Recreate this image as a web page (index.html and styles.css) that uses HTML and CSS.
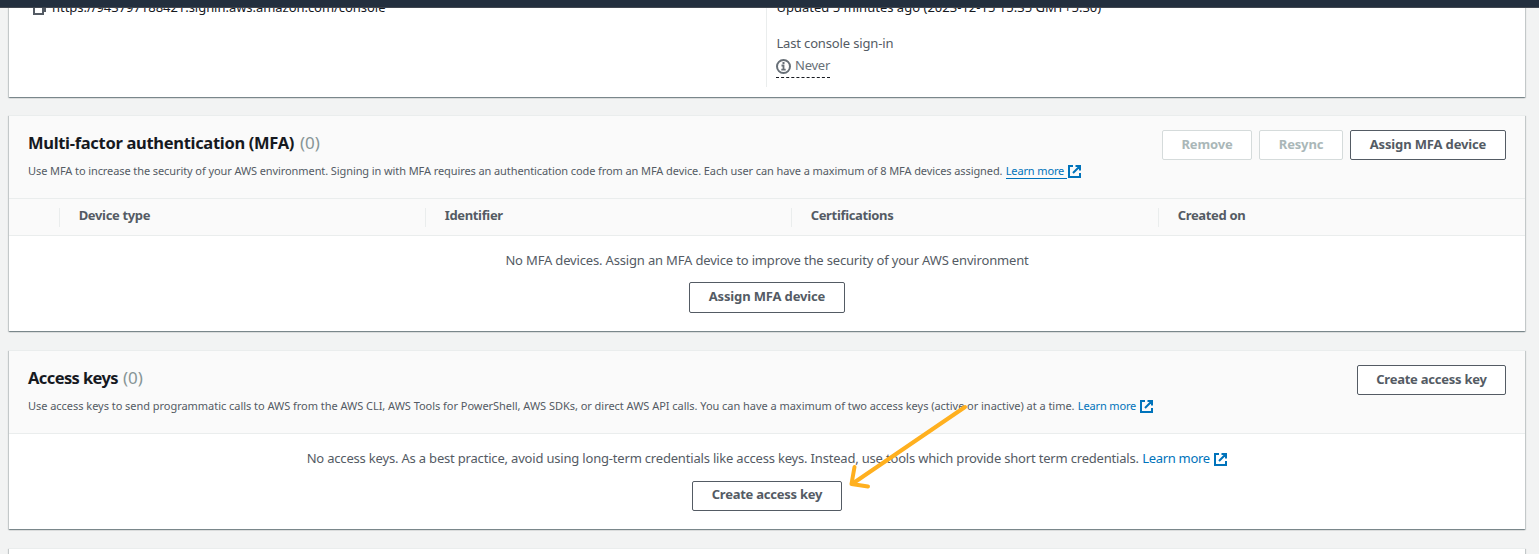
FILE: index.html
```html
<!DOCTYPE html>
<html lang="en">
<head>
<meta charset="utf-8">
<title>Security credentials</title>
<link rel="stylesheet" href="styles.css">
</head>
<body>
<svg width="0" height="0" class="sprite"><symbol id="ext" viewBox="0 0 13 13"><path d="M5 1H1v11h11V8M7.500 1H12v4.500M11.500 1.500L5 8" fill="none" stroke="currentColor" stroke-width="2"/></symbol></svg>
<div class="topbar"></div>
<main class="page">
  <section class="card summary">
    <div class="summary-left">
      <svg class="copy" width="14" height="14" viewBox="0 0 14 14"><path d="M4 1h8v9h-2M1 4h9v9H1z" fill="none" stroke="#545b64" stroke-width="2"/></svg>
      <span class="url">https://943797188421.signin.aws.amazon.com/console</span>
    </div>
    <div class="summary-right">
      <div class="updated">Updated 5 minutes ago (2023-12-15 15:35 GMT+5:30)</div>
      <div class="label">Last console sign-in</div>
      <div class="never"><svg class="info" width="15" height="15" viewBox="0 0 15 15"><circle cx="7.500" cy="7.500" r="6.500" fill="none" stroke="#687078" stroke-width="2"/><path d="M5.500 6.500h2v4M5.300 10.700h4.400M6.500 4h2" fill="none" stroke="#687078" stroke-width="1.800"/></svg><span class="never-text">Never</span></div>
    </div>
  </section>

  <section class="card mfa">
    <header class="head">
      <div class="head-text">
        <h2><span class="title title-mfa">Multi-factor authentication (MFA)</span><span class="count">(0)</span></h2>
        <p class="desc"><span class="desc-mfa">Use MFA to increase the security of your AWS environment. Signing in with MFA requires an authentication code from an MFA device. Each user can have a maximum of 8 MFA devices assigned.</span><a class="link underlined">Learn more</a><svg class="ext"><use href="#ext"/></svg></p>
      </div>
      <div class="actions">
        <button class="btn disabled w-remove">Remove</button>
        <button class="btn disabled w-resync">Resync</button>
        <button class="btn w-assign">Assign MFA device</button>
      </div>
    </header>
    <div class="thead">
      <div class="th check"></div>
      <div class="th">Device type</div>
      <div class="th">Identifier</div>
      <div class="th">Certifications</div>
      <div class="th">Created on</div>
    </div>
    <div class="empty">
      <p class="msg"><span class="msg-mfa">No MFA devices. Assign an MFA device to improve the security of your AWS environment</span></p>
      <button class="btn w-assign tall">Assign MFA device</button>
    </div>
  </section>

  <section class="card keys">
    <header class="head">
      <div class="head-text">
        <h2><span class="title title-keys">Access keys</span><span class="count">(0)</span></h2>
        <p class="desc"><span class="desc-keys">Use access keys to send programmatic calls to AWS from the AWS CLI, AWS Tools for PowerShell, AWS SDKs, or direct AWS API calls. You can have a maximum of two access keys (active or inactive) at a time.</span><a class="link">Learn more</a><svg class="ext"><use href="#ext"/></svg></p>
      </div>
      <div class="actions">
        <button class="btn w-create">Create access key</button>
      </div>
    </header>
    <div class="empty">
      <p class="msg"><span class="msg-keys">No access keys. As a best practice, avoid using long-term credentials like access keys. Instead, use tools which provide short term credentials.</span><a class="link">Learn more</a><svg class="ext"><use href="#ext"/></svg></p>
      <button class="btn w-create">Create access key</button>
    </div>
  </section>

  <section class="card next"></section>
</main>
<svg class="arrow" width="130" height="90" viewBox="0 0 130 90"><path d="M124 6L11 83M13.500 66L10.500 83L27 85.500" fill="none" stroke="#ffb01f" stroke-width="4" stroke-linecap="round" stroke-linejoin="round"/></svg>
</body>
</html>
```
FILE: styles.css
```css
* { box-sizing: border-box; }
html { height: 554px; overflow: hidden; }
body {
  margin: 0;
  height: 554px;
  overflow: hidden;
  background: #f2f3f3;
  color: #545b64;
  font: 13px/20px "Noto Sans", "Open Sans", sans-serif;
}
h2, p { margin: 0; font-weight: 400; }
.sprite { display: block; position: absolute; }
.topbar {
  position: absolute;
  inset: 0 0 auto;
  z-index: 2;
  height: 8px;
  background: #232f3e;
  border-bottom: 1px solid #414750;
}
.page { display: flex; flex-direction: column; gap: 18px; height: 554px; overflow: hidden; padding: 0 14px 0 9px; }
.card {
  flex: none;
  background: #fff;
  border-top: 1px solid #eaeded;
  box-shadow: 0 1px 1px 0 rgba(0,28,36,.3), 1px 1px 1px 0 rgba(0,28,36,.15), -1px 1px 1px 0 rgba(0,28,36,.15);
}
.summary { display: flex; height: 97px; border-top: 0; color: #16191f; }
.summary-left { display: flex; width: 757px; padding-left: 24px; }
.copy { margin-top: 1px; }
.url { margin: -3px 0 0 5px; letter-spacing: -.04px; }
.summary-right { height: 87px; border-left: 1px solid #eaeded; padding-left: 9.400px; }
.updated { height: 34px; margin-top: -3px; letter-spacing: .015px; }
.label { height: 22px; margin-top: 2px; color: #545b64; letter-spacing: -.15px; }
.never { display: flex; width: 54px; height: 23px; margin-left: -.4px; border-bottom: 1px dashed #16191f; color: #687078; }
.info { flex: none; margin: 4px 4px 0 0; }
.never-text { letter-spacing: -.25px; }
.mfa { height: 216px; margin-bottom: 1px; }
.keys { height: 179px; margin-bottom: 1px; }
.next { height: 40px; }
.head { display: flex; justify-content: space-between; height: 83px; padding: 14px 19px 0 19px; background: #fafafa; border-bottom: 1px solid #eaeded; }
h2 { display: flex; height: 26px; font-size: 17px; line-height: 26px; color: #16191f; }
.title { font-size: 16.500px; line-height: 25px; font-weight: 700; white-space: nowrap; }
.title-mfa { width: 267px; letter-spacing: -.31px; }
.title-keys { width: 90px; letter-spacing: -.6px; }
.count { margin-left: 5px; color: #879596; }
.desc { display: flex; margin-top: 5px; font-size: 11px; line-height: 20px; white-space: pre; }
.desc-mfa { letter-spacing: -.091px; }
.desc-keys { letter-spacing: -.036px; }
.link { margin-left: 3.300px; color: #0073bb; letter-spacing: -.14px; }
.underlined { height: 18px; margin-right: -3px; padding-right: 3px; border-bottom: 1px solid #0073bb; }
.ext { width: 13px; height: 13px; color: #0073bb; margin: 4px 0 0 3.500px; }
.actions { display: flex; gap: 7px; }
.btn { height: 30px; padding: 0 0 2px; border: 1px solid #545b64; border-radius: 2px; background: #fff; color: #545b64; font: 700 13px/20px "Noto Sans", sans-serif; white-space: nowrap; letter-spacing: -.15px; }
.disabled { color: #aab7b8; border-color: #d5dbdb; }
.w-remove { width: 90px; }
.w-resync { width: 84px; }
.w-assign { width: 156px; }
.w-create { width: 149px; letter-spacing: -.24px; }
.tall { height: 31px; padding-bottom: 3px; }
.thead { display: grid; grid-template-columns: 50px 366px 366px 367px 1fr; align-items: center; height: 37px; background: #fafafa; border-bottom: 1px solid #eaeded; }
.th { height: 19px; line-height: 15px; padding-left: 18.700px; border-left: 1px solid #eaeded; font-weight: 700; letter-spacing: -.34px; }
.check { border: 0; }
.empty { display: flex; flex-direction: column; align-items: center; padding-top: 14px; }
.msg { display: flex; white-space: pre; height: 32px; }
.keys .msg { height: 33px; }
.keys .empty .btn { width: 150px; padding-bottom: 4px; }
.msg-mfa { letter-spacing: -.165px; }
.msg-keys { letter-spacing: -.187px; }
.msg .link { letter-spacing: -.3px; }
.msg .ext { margin: 5px 0 0 4.500px; }
.arrow { position: absolute; left: 841px; top: 401px; }
```
